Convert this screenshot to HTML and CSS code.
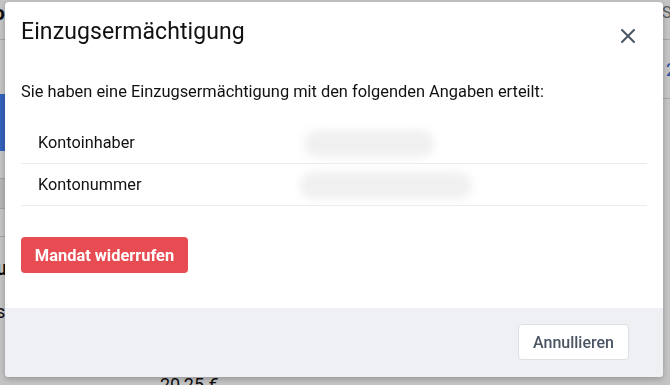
FILE: index.html
```html
<!DOCTYPE html>
<html lang="de">
<head>
<meta charset="utf-8">
<title>Einzugsermächtigung</title>
<link rel="stylesheet" href="styles.css">
</head>
<body>
<div class="page">
  <div class="topbar">
    <span class="brand">Konto</span>
    <span class="top-right">Se</span>
  </div>
  <div class="content">
    <aside class="side">
      <div class="side-item first"></div>
      <div class="side-item active"></div>
      <div class="side-item"></div>
      <div class="side-item shade"></div>
      <div class="side-item"></div>
      <div class="side-label">u</div>
      <div class="side-label small">s</div>
    </aside>
    <main class="main">
      <div class="amount-row"><span class="num">2</span></div>
      <div class="price">20,25 €</div>
    </main>
  </div>
</div>

<div class="backdrop"></div>

<div class="modal" role="dialog" aria-labelledby="mtitle">
  <div class="modal-header">
    <h2 id="mtitle" class="modal-title">Einzugsermächtigung</h2>
    <button class="close" aria-label="Schließen">
      <svg width="14" height="14" viewBox="0 0 14 14"><path d="M1 1L13 13M13 1L1 13" stroke="#4b5563" stroke-width="2" stroke-linecap="round" fill="none"/></svg>
    </button>
  </div>
  <div class="modal-body">
    <p class="intro">Sie haben eine Einzugsermächtigung mit den folgenden Angaben erteilt:</p>
    <div class="details">
      <div class="row">
        <span class="label">Kontoinhaber</span>
        <span class="value"><span class="blur w1"></span></span>
      </div>
      <div class="row">
        <span class="label">Kontonummer</span>
        <span class="value"><span class="blur w2"></span></span>
      </div>
    </div>
    <button class="btn-danger">Mandat widerrufen</button>
  </div>
  <div class="modal-footer">
    <button class="btn-light">Annullieren</button>
  </div>
</div>
</body>
</html>
```

FILE: styles.css
```css
* { box-sizing: border-box; }
html, body { margin: 0; padding: 0; }
body {
  font-family: Roboto, "Liberation Sans", Arial, sans-serif;
  background: #ffffff;
  width: 670px;
  height: 385px;
  overflow: hidden;
  color: #111;
}

/* background page */
.page { width: 670px; height: 385px; display: flex; flex-direction: column; }
.topbar {
  height: 40px;
  display: flex;
  justify-content: space-between;
  align-items: flex-start;
  border-bottom: 1px solid #d8d8d8;
  padding-top: 2px;
}
.brand { font-size: 20px; font-weight: 700; margin-left: -48px; color: #111; line-height: 22px; }
.top-right { font-size: 16px; color: #777; margin-right: -10px; line-height: 22px; }
.content { flex: 1; display: flex; }
.side { width: 120px; display: flex; flex-direction: column; }
.side-item { height: 28px; border-bottom: 1px solid #d0d0d0; }
.side-item.first { height: 54px; border: 0; }
.side-item.active { height: 57px; background: #447ff5; border: 0; }
.side-item.shade { height: 30px; background: #ececec; }
.side-label { font-size: 20px; font-weight: 700; line-height: 23px; margin-top: 20px; margin-left: -4px; }
.side-label.small { font-size: 18px; font-weight: 400; line-height: 21px; margin-top: 21px; }
.main { flex: 1; display: flex; flex-direction: column; }
.amount-row {
  height: 59px;
  border-bottom: 1px solid #d8d8d8;
  display: flex;
  justify-content: flex-end;
  align-items: center;
}
.num { color: #2f66d6; font-size: 18px; margin-right: -6px; }
.price { margin-top: auto; margin-left: 40px; margin-bottom: -10px; font-size: 18px; }

.backdrop {
  position: fixed;
  inset: 0;
  background: rgba(0, 0, 0, 0.23);
}

/* modal */
.modal {
  position: fixed;
  left: 5px;
  top: 2px;
  width: 658px;
  height: 375px;
  background: #fff;
  border-radius: 4px;
  box-shadow: 0 2px 6px rgba(0, 0, 0, 0.25);
  display: flex;
  flex-direction: column;
  overflow: hidden;
}
.modal-header {
  display: flex;
  justify-content: space-between;
  align-items: flex-start;
  padding: 17px 16px 0 16px;
}
.modal-title {
  margin: 0;
  font-size: 23px;
  font-weight: 400;
  letter-spacing: 0.1px;
  line-height: 26px;
  color: #111;
}
.close {
  border: 0;
  background: none;
  padding: 0;
  margin: 10px 12px 0 0;
  width: 14px;
  height: 14px;
  display: flex;
  cursor: pointer;
}
.modal-body { padding: 35px 16px 0 16px; }
.intro { margin: 0; font-size: 16.4px; line-height: 24px; color: #111; }
.details { margin-top: 18px; }
.row {
  display: grid;
  grid-template-columns: 262px 1fr;
  align-items: center;
  padding: 9px 0 8px 17px;
  border-bottom: 1px solid #ececec;
  font-size: 16.3px;
  line-height: 24px;
}
.label { color: #111; }
.value { display: flex; height: 24px; align-items: center; }
.blur {
  display: block;
  height: 27px;
  background: #f0f0f0;
  border-radius: 14px;
  filter: blur(4px);
}
.w1 { width: 130px; margin-left: 4px; }
.w2 { width: 172px; }
.btn-danger {
  margin-top: 31px;
  height: 36px;
  width: 167px;
  border: 0;
  border-radius: 4px;
  background: #e84c53;
  color: #fff;
  font-family: inherit;
  font-size: 16.4px;
  font-weight: 700;
  padding: 0;
}
.modal-footer {
  margin-top: auto;
  height: 69px;
  background: #eef0f4;
  display: flex;
  justify-content: flex-end;
  align-items: flex-start;
  padding: 16px 34px 0 0;
}
.btn-light {
  height: 36px;
  width: 111px;
  background: #fff;
  border: 1px solid #dcdfe4;
  border-radius: 4px;
  color: #4b5563;
  font-family: inherit;
  font-size: 16px;
  font-weight: 500;
  padding: 0;
}
```
